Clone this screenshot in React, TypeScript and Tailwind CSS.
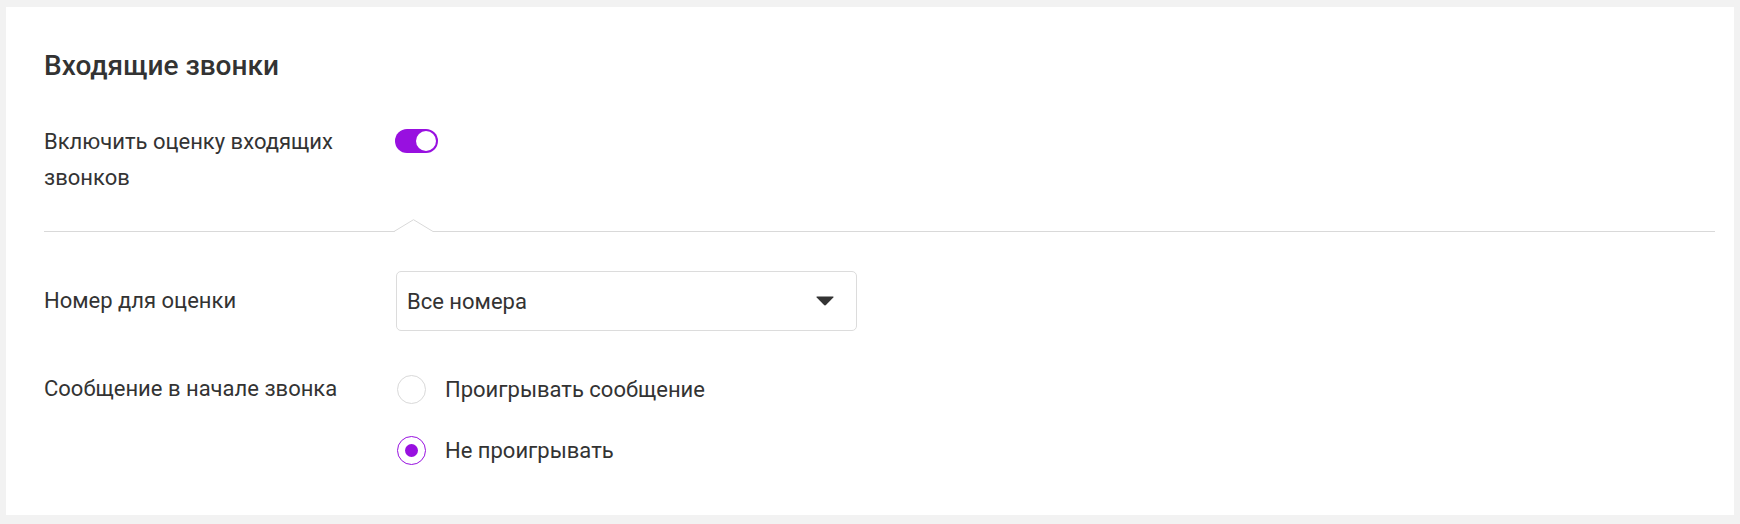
import { useState } from 'react';

export default function App() {
  const [enabled, setEnabled] = useState(true);
  const [playMessage, setPlayMessage] = useState(false);

  return (
    <div className="min-h-screen bg-[#f2f2f2] pt-[7px] pl-[6px] pr-[6px] pb-[9px] font-['Roboto',sans-serif] text-[#333333]">

      <div className="bg-white h-[508px] pt-[43px] pl-[38px] pr-[19px]">

        {/* TITLE */}

        <h1 className="text-[28px] leading-[32px] font-medium">
          Входящие звонки
        </h1>

        {/* TOGGLE ROW */}

        <div className="flex mt-[42px]">

          <p className="w-[351px] pr-[30px] text-[22px] leading-[36px]">
            Включить оценку входящих звонков
          </p>

          <button
            onClick={() => setEnabled(!enabled)}
            className={`mt-[5px] w-[43px] h-[24px] rounded-full flex items-center px-[2px] ${enabled ? 'bg-[#9810e0] justify-end' : 'bg-[#cccccc] justify-start'}`}
          >
            <span className="w-[20px] h-[20px] rounded-full bg-white" />
          </button>

        </div>

        {/* DIVIDER */}

        <div className="flex items-end h-[13px] mt-[23px]">

          <div className="w-[351px] h-px bg-[#d9d9d9]" />

          <svg width="39" height="13" viewBox="0 0 39 13" className="shrink-0 -ml-px">
            <polyline points="0,12.5 19.5,0.7 39,12.5" fill="white" stroke="#d9d9d9" strokeWidth="1" />
          </svg>

          <div className="flex-1 h-px bg-[#d9d9d9]" />

        </div>

        {/* NUMBER */}

        <div className="flex items-center mt-[39px]">

          <p className="w-[352px] text-[22px] leading-[36px]">
            Номер для оценки
          </p>

          <div className="w-[461px] h-[60px] border border-[#dcdcdc] rounded-[5px] flex items-center justify-between pl-[10px] pr-[22px] cursor-pointer">

            <span className="text-[22px]">
              Все номера
            </span>

            <svg width="18" height="10" viewBox="0 0 18 10">
              <path d="M1 0.5 H17 Q18 0.5 17.3 1.4 L10.2 8.8 Q9 10 7.8 8.8 L0.7 1.4 Q0 0.5 1 0.5 Z" fill="#333333" />
            </svg>

          </div>

        </div>

        {/* MESSAGE */}

        <div className="flex mt-[40px]">

          <p className="w-[353px] text-[22px] leading-[36px]">
            Сообщение в начале звонка
          </p>

          <div className="flex flex-col gap-[25px]">

            <label
              onClick={() => setPlayMessage(true)}
              className="flex items-center h-[36px] gap-[19px] cursor-pointer"
            >

              <span className={`w-[29px] h-[29px] rounded-full border flex items-center justify-center ${playMessage ? 'border-[#9810e0]' : 'border-[#d9d9d9]'}`}>
                {playMessage && <span className="w-[13px] h-[13px] rounded-full bg-[#9810e0]" />}
              </span>

              <span className="text-[22px]">
                Проигрывать сообщение
              </span>

            </label>

            <label
              onClick={() => setPlayMessage(false)}
              className="flex items-center h-[36px] gap-[19px] cursor-pointer"
            >

              <span className={`w-[29px] h-[29px] rounded-full border flex items-center justify-center ${!playMessage ? 'border-[#9810e0]' : 'border-[#d9d9d9]'}`}>
                {!playMessage && <span className="w-[13px] h-[13px] rounded-full bg-[#9810e0]" />}
              </span>

              <span className="text-[22px]">
                Не проигрывать
              </span>

            </label>

          </div>

        </div>

      </div>

    </div>
  );
}
